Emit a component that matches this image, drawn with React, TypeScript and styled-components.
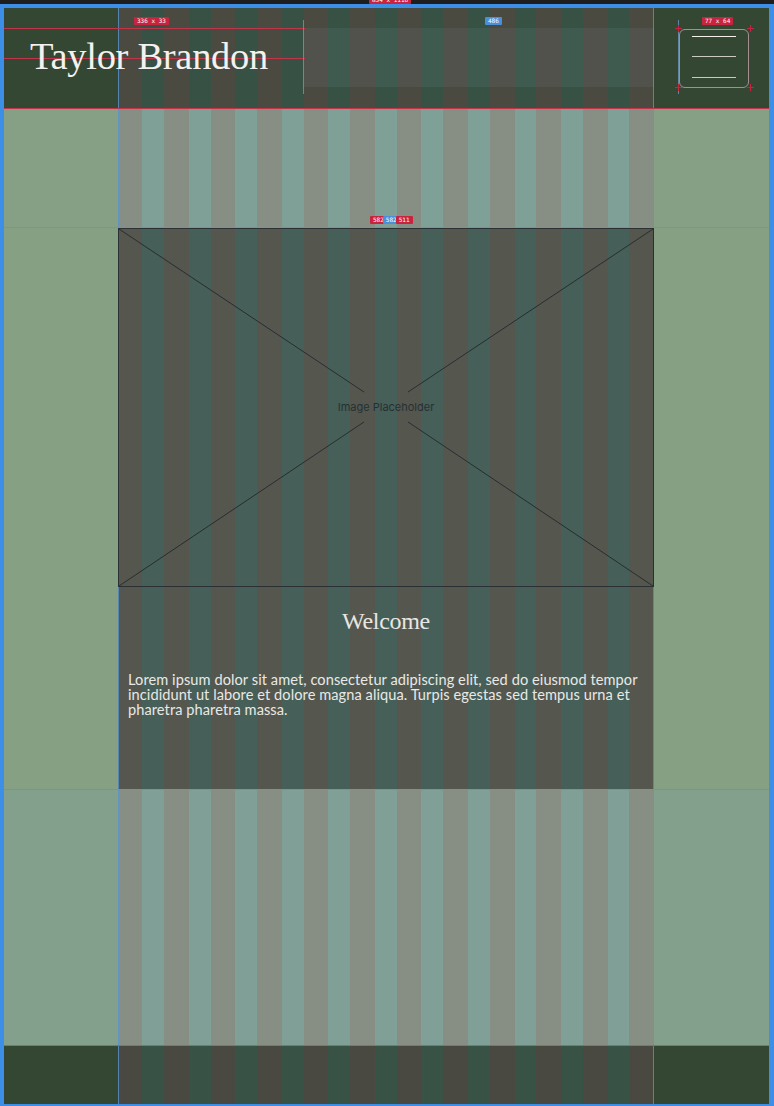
import styled, { createGlobalStyle } from "styled-components";

// Colours sampled from the editor canvas. Each band has a bare fill plus the
// tinted column and gutter colours of the 12-column layout grid overlay.
const GUIDE = "rgba(86, 150, 214, 0.75)";
const SELECT = "#c9243f";
const HINT = "#4a90d9";

const GlobalStyle = createGlobalStyle`
  html, body {
    margin: 0;
    background: #1e1e1e;
  }
  * {
    box-sizing: border-box;
  }
`;

const stripes = (col: string, gut: string) =>
  `repeating-linear-gradient(90deg, ${col} 0 24.5px, ${gut} 24.5px 46.5px) 114px 0 / 536px 100% no-repeat`;

const guides = `linear-gradient(${GUIDE}, ${GUIDE}) 114px 0 / 1px 100% no-repeat,
  linear-gradient(${GUIDE}, ${GUIDE}) 649px 0 / 1px 100% no-repeat`;

// Canvas around the selected frame.
const Canvas = styled.div`
  width: 774px;
  height: 1106px;
  background: #1e1e1e;
  overflow: hidden;
`;

const TopBar = styled.div`
  position: relative;
  height: 4px;
`;

const SizeTag = styled.span<{ $bg?: string }>`
  display: inline-block;
  padding: 1px 3px;
  background: ${(p) => p.$bg ?? SELECT};
  color: #ffffff;
  font-family: "DejaVu Sans Mono", monospace;
  font-size: 6px;
  line-height: 6px;
  border-radius: 1px;
  white-space: nowrap;
`;

const TopTag = styled(SizeTag)`
  position: absolute;
  left: 369px;
  top: -4px;
  z-index: 3;
`;

const Frame = styled.main`
  width: 774px;
  height: 1102px;
  border-style: solid;
  border-color: #3d8ee6;
  border-width: 4px 5px 2px 4px;
  display: flex;
  flex-direction: column;
`;

const Band = styled.section<{ $bare: string; $col: string; $gut: string; $h: number; $line?: string }>`
  position: relative;
  flex: 0 0 ${(p) => p.$h}px;
  background: ${guides}, ${(p) => stripes(p.$col, p.$gut)}, ${(p) => p.$bare};
  border-top: ${(p) => (p.$line ? `1px solid ${p.$line}` : "none")};
`;

// Header
const Header = styled(Band)`
  display: flex;
  align-items: center;
  justify-content: space-between;
  padding: 0 20px 0 26px;
  border-bottom: 1px solid #c0354a;
`;

const Brand = styled.h1`
  margin: -5px 0 0;
  font-family: "Liberation Serif", "Times New Roman", serif;
  font-weight: 400;
  font-size: 38.5px;
  letter-spacing: -0.3px;
  color: #f4f1ee;
  position: relative;
  z-index: 1;
`;

const Menu = styled.button`
  position: relative;
  z-index: 1;
  width: 70px;
  height: 59px;
  padding: 6px 12px 9px;
  border: 1px solid #a68d92;
  border-radius: 6px;
  background: transparent;
  display: flex;
  flex-direction: column;
  justify-content: space-between;
`;

const MenuBar = styled.span<{ $bright?: boolean }>`
  display: block;
  height: 1px;
  background: ${(p) => (p.$bright ? "#f2f2ea" : "#c9cbc2")};
`;

// Editor overlays drawn over the header
const HLine = styled.div<{ $top: number; $left: number; $w: number; $c: string }>`
  position: absolute;
  top: ${(p) => p.$top}px;
  left: ${(p) => p.$left}px;
  width: ${(p) => p.$w}px;
  height: 1px;
  background: ${(p) => p.$c};
`;

const VLine = styled.div<{ $top: number; $left: number; $h: number; $c: string }>`
  position: absolute;
  top: ${(p) => p.$top}px;
  left: ${(p) => p.$left}px;
  width: 1px;
  height: ${(p) => p.$h}px;
  background: ${(p) => p.$c};
`;

const Highlight = styled.div`
  position: absolute;
  top: 20px;
  left: 299px;
  width: 351px;
  height: 59px;
  background: rgba(200, 220, 240, 0.06);
`;

const Tag = styled.div<{ $top: number; $left: number }>`
  position: absolute;
  top: ${(p) => p.$top}px;
  left: ${(p) => p.$left}px;
  display: flex;
  z-index: 2;
`;

// Small red cross marking a corner of the selected button.
const Corner = styled.div<{ $top: number; $left: number }>`
  position: absolute;
  top: ${(p) => p.$top - 3}px;
  left: ${(p) => p.$left - 3}px;
  width: 7px;
  height: 7px;
  z-index: 2;
  background:
    linear-gradient(${SELECT}, ${SELECT}) 3px 0 / 1px 7px no-repeat,
    linear-gradient(${SELECT}, ${SELECT}) 0 3px / 7px 1px no-repeat;
`;

// Card with image placeholder and welcome copy
const CardColumn = styled.div`
  margin-left: 114px;
  width: 536px;
  height: 100%;
  display: flex;
  flex-direction: column;
`;

const Placeholder = styled.div`
  position: relative;
  height: 359px;
  border: 1px solid #2a3034;
  display: flex;
  align-items: center;
  justify-content: center;
`;

const Cross = styled.svg`
  position: absolute;
  inset: 0;
  width: 100%;
  height: 100%;
`;

const PlaceholderLabel = styled.span`
  position: relative;
  font-family: Inter, "Liberation Sans", sans-serif;
  font-size: 11px;
  color: #263033;
  margin-top: -1px;
`;

const Heading = styled.h2`
  margin: 21px 0 0;
  text-align: center;
  font-family: "Liberation Serif", "Times New Roman", serif;
  font-weight: 400;
  font-size: 24px;
  letter-spacing: -0.3px;
  color: #e8e6e2;
`;

const Copy = styled.p`
  margin: 37px 0 0;
  padding: 0 10px;
  font-family: Lato, "Open Sans", sans-serif;
  font-size: 14.6px;
  letter-spacing: 0.07px;
  line-height: 15px;
  color: #e9e9e6;
`;

export default function App() {
  return (
    <>
      <GlobalStyle />
      <Canvas>
        <TopBar>
          <TopTag>834 x 1116</TopTag>
        </TopBar>
        <Frame>
          <Header as="header" $bare="#344733" $col="#4a4a41" $gut="#375245" $h={101}>
            <Highlight />
            <HLine $top={20} $left={0} $w={301} $c="#c0354a" />
            <HLine $top={50} $left={0} $w={301} $c="#c0354a" />
            <VLine $top={12} $left={299} $h={74} $c="rgba(110,150,190,0.8)" />
            <VLine $top={12} $left={674} $h={74} $c="rgba(110,150,190,0.8)" />
            <Tag $top={9} $left={130}>
              <SizeTag>336 x 33</SizeTag>
            </Tag>
            <Tag $top={9} $left={481}>
              <SizeTag $bg={HINT}>486</SizeTag>
            </Tag>
            <Tag $top={9} $left={698}>
              <SizeTag>77 x 64</SizeTag>
            </Tag>
            <Corner $top={20} $left={674} />
            <Corner $top={20} $left={746} />
            <Corner $top={79} $left={674} />
            <Corner $top={79} $left={746} />
            <Brand>Taylor Brandon</Brand>
            <Menu aria-label="Menu">
              <MenuBar $bright />
              <MenuBar />
              <MenuBar />
            </Menu>
          </Header>

          <Band $bare="#86a085" $col="#878f84" $gut="#7fa096" $h={118}>
            <Tag $top={107} $left={366}>
              <SizeTag>582</SizeTag>
              <SizeTag $bg={HINT} style={{ marginLeft: -4 }}>582</SizeTag>
              <SizeTag style={{ marginLeft: -4 }}>511</SizeTag>
            </Tag>
          </Band>

          <Band $bare="#86a084" $col="#55574f" $gut="#465f58" $h={562} $line={GUIDE}>
            <CardColumn>
              <Placeholder>
                <Cross viewBox="0 0 536 359" preserveAspectRatio="none">
                  <g stroke="#262c30" strokeWidth="1" fill="none">
                    <line x1="0" y1="0" x2="246" y2="164" />
                    <line x1="290" y1="194" x2="536" y2="359" />
                    <line x1="536" y1="0" x2="290" y2="164" />
                    <line x1="246" y1="194" x2="0" y2="359" />
                  </g>
                </Cross>
                <PlaceholderLabel>Image Placeholder</PlaceholderLabel>
              </Placeholder>
              <Heading>Welcome</Heading>
              <Copy>
                Lorem ipsum dolor sit amet, consectetur adipiscing elit, sed do eiusmod tempor
                incididunt ut labore et dolore magna aliqua. Turpis egestas sed tempus urna et
                pharetra pharetra massa.
              </Copy>
            </CardColumn>
          </Band>

          <Band $bare="#82a08b" $col="#878f84" $gut="#80a097" $h={256} $line={GUIDE} />

          <Band as="footer" $bare="#344733" $col="#4a4941" $gut="#385346" $h={59} $line={GUIDE} />
        </Frame>
      </Canvas>
    </>
  );
}
